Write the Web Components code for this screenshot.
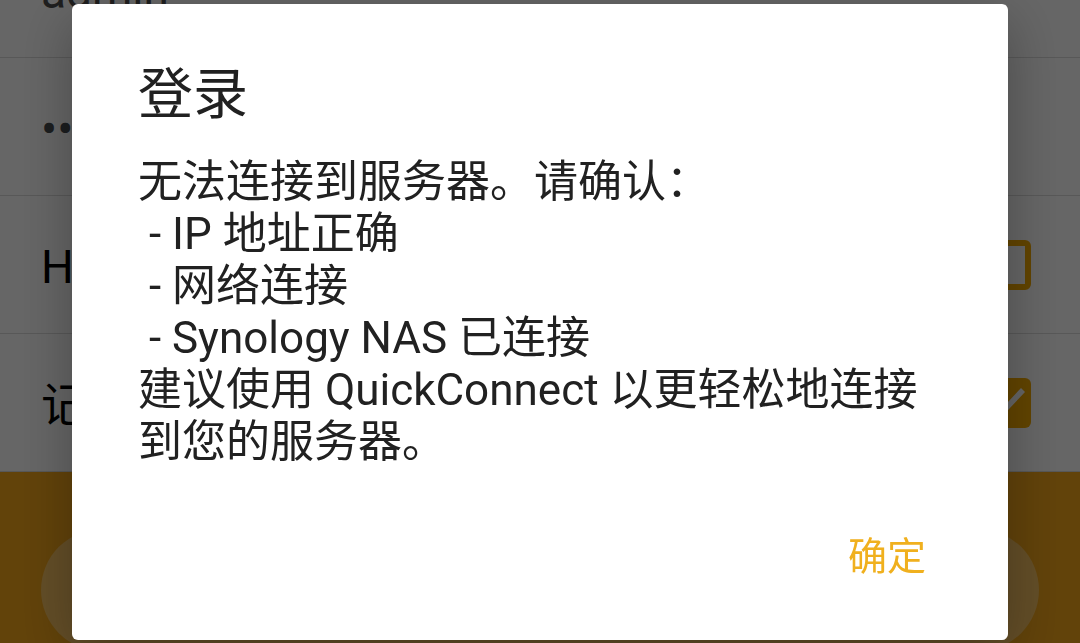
<!DOCTYPE html>
<html lang="zh-CN">
<head>
<meta charset="utf-8">
<meta name="viewport" content="width=device-width, initial-scale=1">
<title>登录</title>
<style>
  html, body { margin: 0; height: 100%; }
  body {
    font-family: Roboto, "Noto Sans CJK SC", sans-serif;
    color: #212121;
    overflow: hidden;
  }
</style>
</head>
<body>
<login-page></login-page>
<message-dialog><span slot="title">登录</span>无法连接到服务器。请确认：
 - IP 地址正确
 - 网络连接
 - Synology NAS 已连接
建议使用 QuickConnect 以更轻松地连接到您的服务器。<span slot="action">确定</span></message-dialog>

<script>
function define(name, html) {
  customElements.define(name, class extends HTMLElement {
    constructor() {
      super();
      const template = document.createElement('template');
      template.innerHTML = html;
      this.attachShadow({ mode: 'open' }).append(template.content.cloneNode(true));
    }
    connectedCallback() {
      const input = this.shadowRoot.querySelector('input');
      if (!input) return;
      if (this.hasAttribute('type')) input.type = this.getAttribute('type');
      if (this.hasAttribute('value')) input.value = this.getAttribute('value');
      if (this.hasAttribute('label')) input.setAttribute('aria-label', this.getAttribute('label'));
      if (this.hasAttribute('checked')) input.checked = true;
    }
  });
}

define('text-row', `
  <style>
    :host { display: flex; align-items: center; box-sizing: border-box; height: 138px;
      padding: 6px 41px 0; border-bottom: 1px solid #dcdcdc; }
    input { flex: 1; min-width: 0; height: 60px; border: 0; padding: 0; outline: 0;
      background: none; font: 46px/60px Roboto, sans-serif; color: #4c4c4c; }
    input[type=password] { font-size: 48px; color: #464a4e; }
  </style>
  <input>`);

define('check-row', `
  <style>
    :host { display: block; box-sizing: border-box; height: 138px; border-bottom: 1px solid #dcdcdc; }
    label { display: flex; align-items: center; justify-content: space-between;
      height: 100%; padding: 0 49px 0 41px; font-size: 46px; line-height: 60px; color: #000; }
    span { padding-top: 4px; }
    input { appearance: none; box-sizing: border-box; width: 50px; height: 50px; margin: 0;
      border: 6px solid #f5ab00; border-radius: 6px; }
    input:checked { background: #f5ab00; border: 0; }
    input:checked::before { content: ""; display: block; height: 100%; background: #fff;
      clip-path: polygon(39% 81%, 11% 53%, 19% 45%, 39% 65%, 80% 21%, 88% 29%); }
  </style>
  <label><span><slot></slot></span><input type="checkbox"></label>`);

define('login-page', `
  <style>
    :host { display: flex; flex-direction: column; height: 100%; overflow: hidden; background: #fff; }
    .first { flex: none; height: 58px; overflow: hidden; display: flex; flex-direction: column; justify-content: flex-end; }
    text-row, check-row { flex: none; }
    footer { flex: 1 0 auto; padding: 57px 41px 0; background: #f5a71a; }
    button { display: block; width: 100%; height: 122px; border: 0; border-radius: 61px;
      background: rgba(255, 255, 255, .32); }
  </style>
  <div class="first"><text-row label="账号" value="admin"></text-row></div>
  <text-row label="密码" type="password" value="password"></text-row>
  <check-row>H</check-row>
  <check-row checked>记</check-row>
  <footer><button type="button" aria-label="登录"></button></footer>`);

define('message-dialog', `
  <style>
    :host { position: fixed; inset: 0; box-sizing: border-box; padding: 4px 72px;
      background: rgba(0, 0, 0, .6); }
    section { box-sizing: border-box; padding: 58px 66px 39px; border-radius: 6px;
      background: #fff; box-shadow: 0 16px 56px rgba(0, 0, 0, .3); }
    h1 { margin: 0 0 30px; font-size: 55px; line-height: 64px; font-weight: 400; }
    p { margin: 0; font-size: 44px; line-height: 52px; white-space: pre-wrap; }
    footer { display: flex; justify-content: flex-end; margin-top: 37px; }
    button { height: 96px; padding: 0 16px; border: 0; background: none;
      font: inherit; font-size: 39px; color: #f0b01e; }
  </style>
  <section role="dialog" aria-modal="true" aria-labelledby="title">
    <h1 id="title"><slot name="title"></slot></h1>
    <p><slot></slot></p>
    <footer><button type="button"><slot name="action"></slot></button></footer>
  </section>`);
</script>
</body>
</html>
